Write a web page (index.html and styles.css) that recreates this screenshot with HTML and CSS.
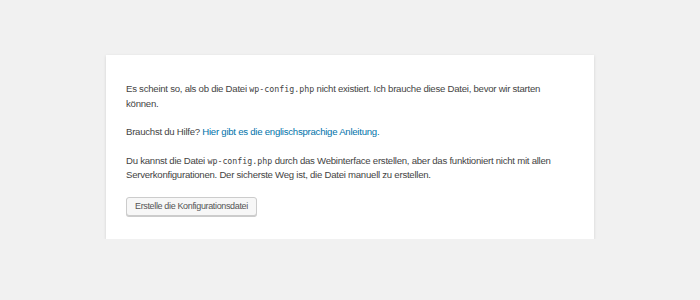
FILE: index.html
```html
<!DOCTYPE html>
<html lang="de">
<head>
<meta charset="utf-8">
<title>WordPress › Setup-Konfigurationsdatei</title>
<link rel="stylesheet" href="styles.css">
</head>
<body>
<div class="card">
  <p>Es scheint so, als ob die Datei <code>wp-config.php</code> nicht existiert. Ich brauche diese Datei, bevor wir starten können.</p>
  <p>Brauchst du Hilfe? <a href="#">Hier gibt es die englischsprachige Anleitung.</a></p>
  <p>Du kannst die Datei <code>wp-config.php</code> durch das Webinterface erstellen, aber das funktioniert nicht mit allen Serverkonfigurationen. Der sicherste Weg ist, die Datei manuell zu erstellen.</p>
  <p class="step"><a href="#" class="button">Erstelle die Konfigurationsdatei</a></p>
</div>
</body>
</html>
```
FILE: styles.css
```css
html{background:#f1f1f1;}
body{margin:0;padding:55px 0 0;background:#f1f1f1;font-family:"Liberation Sans",Arial,sans-serif;font-size:9.6px;letter-spacing:-0.25px;color:#444;}
.card{width:448px;margin:0 auto;padding:12px 20px 23px;background:#fff;box-shadow:0 1px 3px rgba(0,0,0,.13);}
p{margin:15px 0;line-height:13.5px;}
code{font-family:"DejaVu Sans Mono",monospace;font-size:8.3px;letter-spacing:0;}
a{color:#0073aa;text-decoration:none;}
.step{display:flex;margin:15px 0 0;}
.button{display:block;height:19px;line-height:17px;box-sizing:border-box;padding:0 8px;border:1px solid #ccc;border-radius:3px;background:#f7f7f7;color:#555;box-shadow:0 1px 0 #ccc;font-size:9px;letter-spacing:-0.35px;}
```
